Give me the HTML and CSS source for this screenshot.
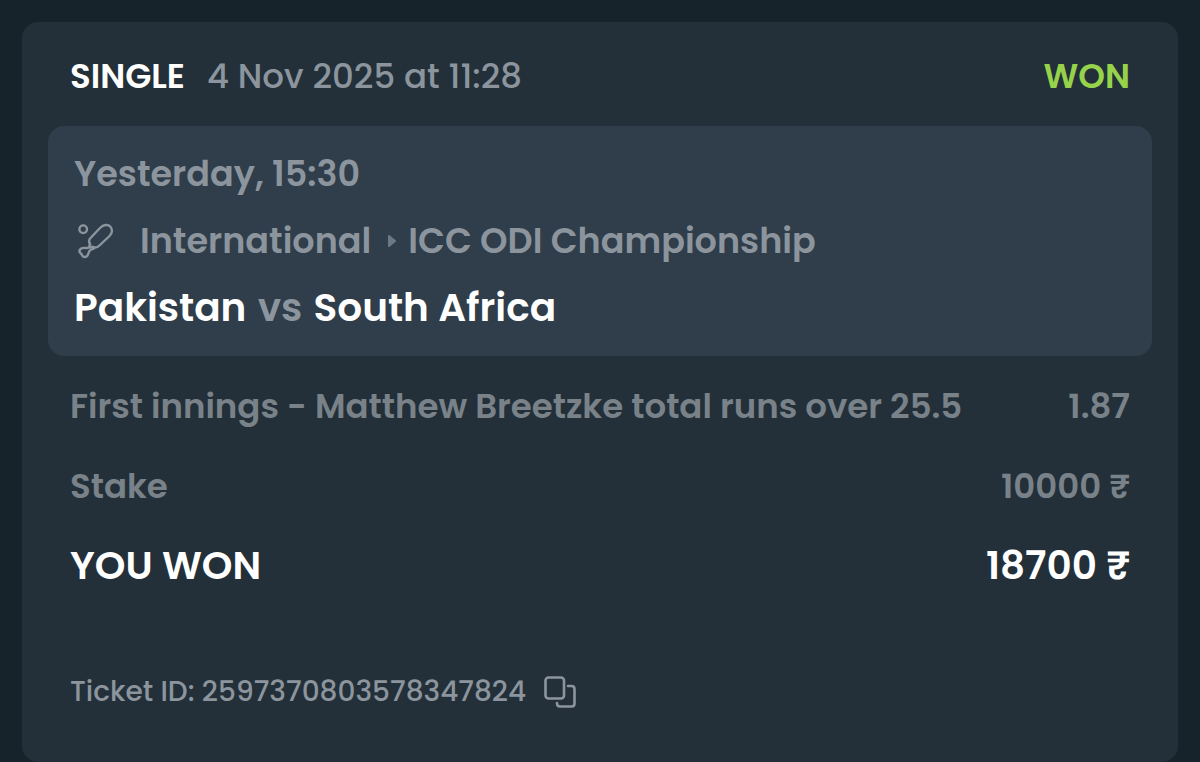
FILE: index.html
```html
<!DOCTYPE html>
<html lang="en">
<head>
    <meta charset="UTF-8">
    <meta name="viewport" content="width=device-width, initial-scale=1.0">
    <title>Bet ticket</title>
    <link rel="stylesheet" href="styles.css">
</head>
<body>
<main class="ticket">
    <header class="ticket-header">
        <span class="ticket-type">SINGLE</span>
        <time class="ticket-date" datetime="2025-11-04T11:28">4 Nov 2025 at 11:28</time>
        <span class="ticket-status">WON</span>
    </header>

    <section class="match">
        <div class="match-time">Yesterday, 15:30</div>
        <div class="match-league">
            <svg class="sport-icon" viewBox="0 0 36 36" aria-hidden="true">
                <circle cx="5.200" cy="6.200" r="3.800"/>
                <path d="M12 21C10.500 18.500 10.500 17 12.500 15L22 5C25.500 1.500 30 1 32.200 3.500C34.800 6 34.500 10 31.500 13L22 22C19.500 24.500 17.500 25.500 15 24"/>
                <path d="M12 21C12.500 23.500 10 25.500 7.500 25C4 24.500 1.200 26 1.500 28.500C1.700 30 3.500 30.500 4 32C5 34.500 8 34.800 9.500 32.500C11 30 10.500 28 12.500 27C14 26.200 16 26.500 16.500 24.500"/>
                <path d="M12 21L11.500 24.500L15 24"/>
            </svg>
            <span>International</span>
            <svg class="arrow-icon" viewBox="0 0 8 12" aria-hidden="true">
                <path d="M1 1L7 6L1 11Z"/>
            </svg>
            <span>ICC ODI Championship</span>
        </div>
        <h1 class="match-teams">Pakistan <span class="versus">vs</span> South Africa</h1>
    </section>

    <dl class="summary">
        <div class="summary-row">
            <dt>First innings - Matthew Breetzke total runs over 25.5</dt>
            <dd>1.87</dd>
        </div>
        <div class="summary-row">
            <dt>Stake</dt>
            <dd>10000 ₹</dd>
        </div>
        <div class="summary-row payout">
            <dt>YOU WON</dt>
            <dd>18700 ₹</dd>
        </div>
    </dl>

    <footer class="ticket-footer">
        <span>Ticket ID: 2597370803578347824</span>
        <button class="copy-btn" type="button" aria-label="Copy ticket ID">
            <svg viewBox="0 0 32 32" aria-hidden="true">
                <rect x="1.500" y="1.500" width="18.500" height="21" rx="3"/>
                <path d="M24 10H27.500Q30.500 10 30.500 13V27.500Q30.500 30.500 27.500 30.500H16Q13 30.500 13 27.500V27"/>
            </svg>
        </button>
    </footer>
</main>
</body>
</html>
```

FILE: styles.css
```css
:root {
    --page-bg-color: #17232b;
    --card-bg-color: #233039;
    --match-bg-color: #2f3e4a;
    --text-color: #ffffff;
    --muted-color: #8c959d;
    --dim-color: #7a8289;
    --won-color: #97d24b;
}

*, *::before, *::after {
    box-sizing: border-box;
}

body {
    font-family: 'Poppins', 'Inter', sans-serif;
    margin: 0;
    padding: 22px 22px 0;
    background-color: var(--page-bg-color);
    color: var(--text-color);
    font-size: 34px;
    font-weight: 600;
    line-height: 40px;
}

.ticket {
    padding: 0 26px 40px;
    background-color: var(--card-bg-color);
    border-radius: 16px;
}

.ticket-header {
    display: flex;
    align-items: center;
    gap: 22px;
    padding: 34px 22px 30px;
}

.ticket-date {
    color: var(--muted-color);
    font-weight: 500;
}

.ticket-status {
    margin-left: auto;
    color: var(--won-color);
}

.match {
    display: flex;
    flex-direction: column;
    gap: 27px;
    padding: 28px 26px;
    background-color: var(--match-bg-color);
    border-radius: 16px;
    color: var(--muted-color);
    font-size: 35px;
}

.match-league {
    display: flex;
    align-items: center;
}

.sport-icon {
    width: 36px;
    height: 36px;
    margin: 0 26px 0 4px;
    fill: none;
    stroke: currentColor;
    stroke-width: 2.4;
    stroke-linecap: round;
    stroke-linejoin: round;
}

.arrow-icon {
    width: 8px;
    height: 12px;
    margin: 0 12px 0 17px;
    fill: #6c7883;
    stroke: #6c7883;
    stroke-width: 2;
    stroke-linejoin: round;
}

.match-teams {
    margin: 0;
    color: var(--text-color);
    font-size: 39px;
    font-weight: 600;
}

.versus {
    margin: 0 2px;
    color: var(--muted-color);
}

.summary {
    margin: 0;
    padding: 30px 22px 0;
    color: var(--dim-color);
}

.summary-row {
    display: flex;
    justify-content: space-between;
    margin-bottom: 40px;
}

.summary-row dd {
    margin: 0;
}

.payout {
    color: var(--text-color);
    font-size: 39px;
}

.ticket-footer {
    display: flex;
    align-items: center;
    gap: 18px;
    padding: 46px 22px 10px;
    color: var(--muted-color);
    font-size: 28px;
    font-weight: 500;
}

.copy-btn {
    display: flex;
    padding: 0;
    border: 0;
    background: none;
    color: inherit;
    cursor: pointer;
}

.copy-btn svg {
    width: 32px;
    height: 32px;
    fill: none;
    stroke: currentColor;
    stroke-width: 2.6;
    stroke-linecap: round;
}
```
